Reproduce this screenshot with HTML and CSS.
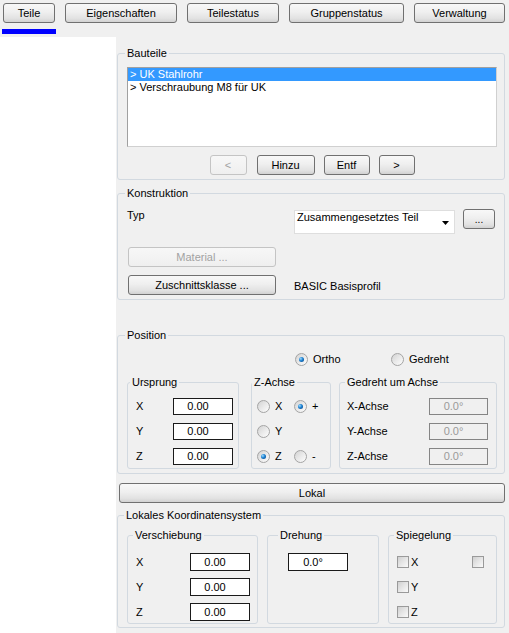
FILE: index.html
```html
<!DOCTYPE html>
<html lang="de">
<head>
<meta charset="utf-8">
<title>Teile</title>
<link rel="stylesheet" href="styles.css">
</head>
<body>
<div class="tabs">
  <div class="btn w-teile">Teile</div>
  <div class="btn w-eig">Eigenschaften</div>
  <div class="btn w-ts">Teilestatus</div>
  <div class="btn w-gs">Gruppenstatus</div>
  <div class="btn w-vw">Verwaltung</div>
</div>
<div class="indicator"></div>
<div class="main">
  <div class="side"></div>
  <div class="panel">
    <div class="group g-bauteile">
      <div class="legend">Bauteile</div>
      <div class="list">
        <div class="row sel">&gt; UK Stahlrohr</div>
        <div class="row">&gt; Verschraubung M8 für UK</div>
      </div>
      <div class="navrow">
        <div class="btn dis nav-prev">&lt;</div>
        <div class="btn nav-add">Hinzu</div>
        <div class="btn nav-del">Entf</div>
        <div class="btn nav-next">&gt;</div>
      </div>
    </div>

    <div class="group g-konst">
      <div class="legend">Konstruktion</div>
      <div class="typrow">
        <div class="typ-label">Typ</div>
        <div class="combo">Zusammengesetztes Teil<span class="combo-arrow"></span></div>
        <div class="btn dots">...</div>
      </div>
      <div class="btn dis wide mat">Material ...</div>
      <div class="zrow">
        <div class="btn wide">Zuschnittsklasse ...</div>
        <div class="ztext">BASIC Basisprofil</div>
      </div>
    </div>

    <div class="group g-pos">
      <div class="legend">Position</div>
      <div class="radiorow">
        <div class="ritem r-ortho"><span class="radio on"></span>Ortho</div>
        <div class="ritem"><span class="radio"></span>Gedreht</div>
      </div>
      <div class="subs">
        <div class="sub s-urs">
          <div class="legend l-urs">Ursprung</div>
          <div class="frow first"><span class="flabel">X</span><span class="field">0.00</span></div>
          <div class="frow"><span class="flabel">Y</span><span class="field">0.00</span></div>
          <div class="frow"><span class="flabel">Z</span><span class="field">0.00</span></div>
        </div>
        <div class="sub s-za">
          <div class="legend l-za">Z-Achse</div>
          <div class="frow first zrowr">
            <div class="ritem zi"><span class="radio"></span>X</div>
            <div class="ritem"><span class="radio on"></span>+</div>
          </div>
          <div class="frow zrowr">
            <div class="ritem zi"><span class="radio"></span>Y</div>
          </div>
          <div class="frow zrowr">
            <div class="ritem zi"><span class="radio on"></span>Z</div>
            <div class="ritem"><span class="radio"></span>-</div>
          </div>
        </div>
        <div class="sub s-gd">
          <div class="legend l-gd">Gedreht um Achse</div>
          <div class="frow first"><span class="flabel">X-Achse</span><span class="field dfield">0.0°</span></div>
          <div class="frow"><span class="flabel">Y-Achse</span><span class="field dfield">0.0°</span></div>
          <div class="frow"><span class="flabel">Z-Achse</span><span class="field dfield">0.0°</span></div>
        </div>
      </div>
    </div>

    <div class="btn lokal">Lokal</div>

    <div class="group g-lok">
      <div class="legend l-lok">Lokales Koordinatensystem</div>
      <div class="subs2">
        <div class="sub2 s-ver">
          <div class="legend l-ver">Verschiebung</div>
          <div class="lrow first"><span class="flabel">X</span><span class="field">0.00</span></div>
          <div class="lrow"><span class="flabel">Y</span><span class="field">0.00</span></div>
          <div class="lrow"><span class="flabel">Z</span><span class="field">0.00</span></div>
        </div>
        <div class="sub2 s-dre">
          <div class="legend l-dre">Drehung</div>
          <div class="lrow first"><span class="field dre">0.0°</span></div>
        </div>
        <div class="sub2 s-spi">
          <div class="legend l-spi">Spiegelung</div>
          <div class="lrow first"><span class="check"></span><span class="clabel">X</span><span class="check cright"></span></div>
          <div class="lrow"><span class="check"></span><span class="clabel">Y</span></div>
          <div class="lrow"><span class="check"></span><span class="clabel">Z</span></div>
        </div>
      </div>
    </div>
  </div>
</div>
</body>
</html>
```
FILE: styles.css
```css
body {
  margin: 0;
  width: 509px;
  height: 633px;
  overflow: hidden;
  background: #f0f0f0;
  color: #000;
  font-family: "Liberation Sans", Arial, sans-serif;
  font-size: 11px;
  line-height: 13px;
}

/* buttons */
.btn {
  box-sizing: border-box;
  height: 20px;
  border: 1px solid #707070;
  border-radius: 3px;
  background: linear-gradient(#f8f8f8 0%, #efefef 45%, #e2e2e2 80%, #d2d2d2 100%);
  display: flex;
  align-items: center;
  justify-content: center;
  white-space: nowrap;
}
.btn.dis {
  border-color: #c4c4c4;
  background: linear-gradient(#f7f7f7, #efefef);
  color: #a2a2a2;
}

/* tabs */
.tabs {
  display: flex;
  gap: 10px;
  padding: 3px 0 0 3px;
}
.w-teile { width: 52px; }
.w-eig { width: 112px; }
.w-ts { width: 92px; }
.w-gs { width: 115px; }
.w-vw { width: 91px; }

.indicator {
  margin: 6px 0 0 2px;
  width: 54px;
  height: 5px;
  background: #0000ff;
}

.main {
  display: flex;
  margin-top: 3px;
  height: 596px;
}
.side {
  width: 116px;
  background: #fff;
}
.panel {
  flex: 1;
}

/* group boxes */
.group {
  box-sizing: border-box;
  width: 388px;
  margin-left: 1px;
  border: 1px solid #d2d9e0;
  border-radius: 3px;
  padding: 0 7px 4px 9px;
}
.legend {
  width: fit-content;
  height: 13px;
  line-height: 13px;
  margin: -7px 0 0 -2px;
  padding: 0 2px;
  background: #f0f0f0;
  white-space: nowrap;
}
.l-lok { margin-left: -3px; }

.g-bauteile { margin-top: 16px; }
.list {
  box-sizing: border-box;
  margin-top: 7px;
  height: 80px;
  background: #fff;
  border: 1px solid;
  border-color: #a0a0a0 #d0d0d0 #d0d0d0 #a0a0a0;
}
.row {
  height: 13px;
  line-height: 13px;
  padding-left: 2px;
  white-space: nowrap;
}
.row.sel {
  background: #3399ff;
  color: #fff;
}
.navrow {
  display: flex;
  justify-content: center;
  margin-top: 8px;
}
.nav-prev { width: 37px; margin-right: 10px; }
.nav-add { width: 58px; margin-right: 9px; }
.nav-del { width: 46px; margin-right: 9px; }
.nav-next { width: 36px; }

/* Konstruktion */
.g-konst { margin-top: 13px; }
.typrow {
  display: flex;
  align-items: flex-start;
  margin-top: 9px;
}
.typ-label { flex: 1; }
.combo {
  position: relative;
  box-sizing: border-box;
  width: 161px;
  height: 24px;
  margin-top: 1px;
  padding-left: 2px;
  line-height: 12px;
  border: 1px solid #dedede;
  background: #fff;
  white-space: nowrap;
}
.combo-arrow {
  position: absolute;
  right: 5px;
  top: 10px;
  width: 7px;
  height: 4px;
  background: #000;
  clip-path: polygon(0 0, 100% 0, 50% 100%);
}
.dots {
  width: 32px;
  margin: 0 2px 0 8px;
  font-size: 10px;
}
.wide {
  width: 148px;
  margin-left: 1px;
}
.mat { margin-top: 13px; }
.zrow {
  display: flex;
  align-items: center;
  margin-top: 8px;
}
.ztext {
  margin-left: 18px;
  padding-top: 2px;
}

/* Position */
.g-pos { margin-top: 35px; }
.radiorow {
  display: flex;
  height: 13px;
  margin-top: 11px;
  padding-left: 168px;
}
.ritem {
  display: flex;
  align-items: center;
  gap: 5px;
}
.r-ortho { width: 96px; }

.radio {
  position: relative;
  flex: none;
  box-sizing: border-box;
  width: 13px;
  height: 13px;
  border-radius: 50%;
  border: 1px solid #a4a4a4;
  background: linear-gradient(135deg, #d2d2d2 0%, #e9e9e9 50%, #fdfdfd 100%);
}
.radio.on::after {
  content: "";
  position: absolute;
  left: 3px;
  top: 3px;
  width: 5px;
  height: 5px;
  border-radius: 50%;
  background: radial-gradient(circle at 35% 35%, #9fdcff 0%, #1a7fd0 45%, #063e7c 100%);
}

.subs {
  display: flex;
  margin-top: 16px;
}
.sub {
  box-sizing: border-box;
  border: 1px solid #d2d9e0;
  border-radius: 3px;
  padding-bottom: 3px;
}
.s-urs { width: 112px; margin-right: 12px; padding: 0 5px 3px 8px; }
.s-za { width: 80px; margin-right: 8px; padding: 0 0 3px 5px; }
.s-gd { flex: 1; padding: 0 8px 3px 7px; }
.l-urs { margin-left: -6px; }
.l-za { margin-left: -5px; }
.l-gd { margin-left: -2px; }

.frow {
  display: flex;
  align-items: center;
  justify-content: space-between;
  height: 17px;
  margin-top: 8px;
}
.frow.first { margin-top: 9px; }
.zrowr { justify-content: flex-start; }
.zi { width: 37px; }

.field {
  box-sizing: border-box;
  width: 60px;
  height: 17px;
  border: 1px solid #1a1a1a;
  background: #fff;
  text-align: center;
  line-height: 15px;
  padding-right: 10px;
}
.dfield {
  width: 59px;
  border-color: #858585;
  background: #f0f0f0;
  color: #9a9a9a;
}

.lokal {
  width: 386px;
  margin: 9px 0 0 3px;
}

/* Lokales Koordinatensystem */
.g-lok { margin-top: 12px; padding-bottom: 3px; }
.subs2 {
  display: flex;
  margin-top: 13px;
}
.sub2 {
  box-sizing: border-box;
  border: 1px solid #d2d9e0;
  border-radius: 3px;
  padding-bottom: 2px;
}
.s-ver { width: 131px; margin-right: 9px; padding: 0 7px 2px 8px; }
.s-dre { width: 112px; margin-right: 9px; padding: 0 0 2px 20px; }
.s-spi { flex: 1; padding: 0 12px 2px 8px; }
.l-ver { margin-left: -3px; }
.l-dre { margin-left: -10px; }
.l-spi { margin-left: -3px; }

.lrow {
  display: flex;
  align-items: center;
  justify-content: space-between;
  height: 18px;
  margin-top: 7px;
}
.lrow.first { margin-top: 11px; }
.lrow .field { height: 18px; line-height: 16px; }
.s-dre .lrow { justify-content: flex-start; }
.s-spi .lrow { justify-content: flex-start; }

.check {
  flex: none;
  box-sizing: border-box;
  width: 12px;
  height: 12px;
  border: 1px solid #9a9a9a;
  background: linear-gradient(135deg, #d0d0d0 0%, #e6e6e6 50%, #fafafa 100%);
}
.clabel { margin-left: 2px; }
.cright { margin-left: auto; }
```
